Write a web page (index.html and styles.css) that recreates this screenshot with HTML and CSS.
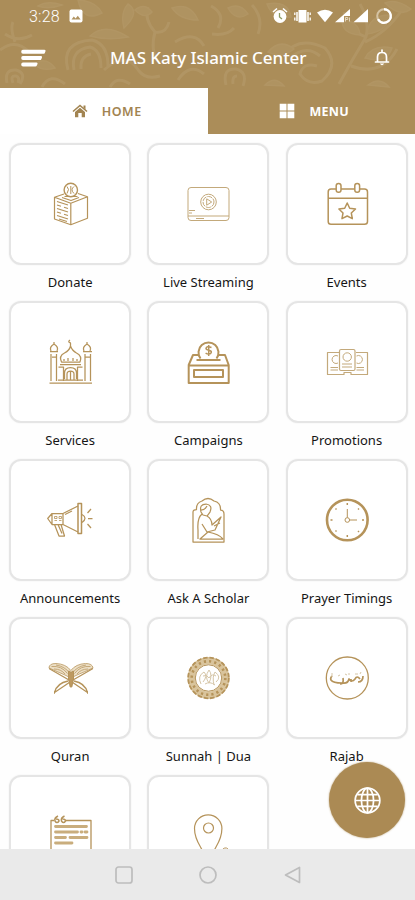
FILE: index.html
```html
<!DOCTYPE html>
<html lang="en">
<head>
<meta charset="utf-8">
<meta name="viewport" content="width=device-width">
<title>MAS Katy Islamic Center</title>
<link rel="stylesheet" href="styles.css">
</head>
<body>
<div class="app">
  <header class="header">
    <svg class="pattern" viewBox="0 0 415 88" aria-hidden="true">
      <g>
        <path d="M68 70Q60 42 92 40Q108 44 108 66M74 70Q70 50 90 47Q101 50 101 68M81 69Q80 56 91 54"/>
        <path d="M104 70Q126 50 139 71Q146 80 160 76M155 32Q150 50 158 62M155 32Q144 20 148 7M155 32Q166 34 169 22"/>
        <path d="M5 34Q18 43 32 35M15 42Q10 28 13 22M0 50Q16 38 29 52M7 83Q4 69 16 70Q27 73 20 84M13 83Q10 75 16 76Q20 77 18 83"/>
        <path class="leaf" d="M90 36Q105 22 128 37Q108 41 90 36ZM124 28Q120 13 128 4Q141 12 124 28ZM78 0Q83 23 102 13Q96 1 78 0ZM135 10Q144 2 152 12Q145 20 135 10ZM38 6Q48 0 62 5Q48 10 38 6ZM34 64Q46 56 55 68Q42 72 34 64ZM172 8Q190 2 198 20Q180 20 172 8Z"/>
        <path d="M175 42Q195 30 204 46M178 80Q190 62 204 74M42 87Q50 72 65 84M110 87Q117 75 130 84"/>
      </g>
      <g>
        <path d="M212 34Q227 36 234 28M226 85Q222 68 236 69Q248 72 243 86M233 84Q232 76 237 76M283 56Q298 35 325 48Q340 65 322 81Q308 86 300 74Q303 62 317 66M290 58Q306 44 320 56"/>
        <path d="M339 84Q352 60 366 37Q370 21 360 4M365 42Q386 33 402 10M351 66Q382 77 397 49M366 37Q347 30 344 12M211 6Q226 14 218 28M252 5Q264 18 258 34"/>
        <path class="leaf" d="M367 34Q369 15 389 15Q389 31 367 34ZM360 35Q342 34 342 20Q359 21 360 35ZM365 58Q373 44 392 48Q387 64 365 58ZM385 3Q396 -2 411 9Q400 18 385 3ZM267 4Q288 0 291 17Q273 20 267 4ZM268 52Q280 38 294 49Q282 59 268 52ZM228 8Q240 2 248 14Q236 22 228 8ZM265 85Q275 75 284 86ZM368 85Q380 76 389 87Z"/>
      </g>
    </svg>
    <div class="status">
      <span class="time">3:28</span>
      <svg class="photo" viewBox="0 0 14 14"><rect x=".5" y=".5" width="13" height="13" rx="2" fill="#fff"/><path d="M2.500 10.500l2.300-3 1.800 2 2.200-2.800 2.800 3.800z" fill="#b09361"/></svg>
      <svg class="signals" viewBox="0 0 122 18">
        <g fill="#fff"><circle cx="8" cy="9.500" r="6.400"/><path d="M1 5l4-3.500M15 5l-4-3.500" stroke="#fff" stroke-width="1.600"/><path d="M26.500 3h8v12.500h-8z"/><path d="M25 5v9M36 5v9" stroke="#fff" stroke-width="1.500"/><path d="M22.800 5.500v2.500M22.800 10.500v3M38.200 5.500v2.500M38.200 10.500v3" stroke="#fff" stroke-width="1.300"/><path d="M45 5.500Q53 0 61 5.500L53 15.200z"/><path d="M63 15.200L78 2v7h-6v6.200zM81.500 15.200L96 2v13.200z"/></g>
        <path d="M7.500 6v4l2.500 2" fill="none" stroke="#8b9a62" stroke-width="1.300"/>
        <path d="M73.500 10.500v4M73.500 10.500h2.300v2h-2M77.500 10.500v4" fill="none" stroke="#e9ddc6" stroke-width=".9"/>
        <circle cx="112" cy="9" r="6.800" fill="none" stroke="#d4c3a3" stroke-width="2"/><path d="M112 2.200A6.800 6.800 0 1 1 106 12.200" fill="none" stroke="#fff" stroke-width="2.400"/>
      </svg>
    </div>
    <div class="titlebar">
      <svg class="burger" viewBox="0 0 26 20"><path d="M3 1.700h21.500q1.500 0 1 1.500l-.7 1.700q-.4.900-1.500.9H3Q1.200 5.800 1.200 3.700T3 1.700zM3 8h18q1.500 0 1 1.500l-.7 1.700q-.4.900-1.500.9H3Q1.200 12.100 1.200 10T3 8zM3 14.500h13.500q1.500 0 1 1.500l-.7 1.600q-.4.900-1.500.9H3q-1.800 0-1.800-2T3 14.500z" fill="#fff"/></svg>
      <h1>MAS Katy Islamic Center</h1>
      <svg class="bell" viewBox="0 0 16 18"><path d="M1.500 13h13M3.500 12.600V8Q3.500 3.500 8 3.500T12.500 8v4.600M8 1v2.300" fill="none" stroke="#fff" stroke-width="1.700" stroke-linecap="round"/><path d="M5.800 14.500h4.400Q8 18 5.800 14.500z" fill="#fff"/></svg>
    </div>
  </header>
  <nav class="tabs">
    <div class="tab active"><svg viewBox="0 0 16 16"><path d="M1 8.500L8 2.500l7 6" fill="none" stroke="currentColor" stroke-width="1.600"/><path d="M11.500 2.500h2v4l-2-1.500zM3 9l5-4.300L13 9v5.200H9.700V10H6.300v4.200H3z" fill="currentColor"/></svg><span>HOME</span></div>
    <div class="tab"><svg viewBox="0 0 16 16"><path d="M.7.700h6.800v6.800H.7zM8.500.700h6.800v6.800H8.500zM.7 8.500h6.800v6.800H.7zM8.500 8.500h6.800v6.800H8.500z" fill="currentColor"/></svg><span>MENU</span></div>
  </nav>
  <main class="grid">
    <div class="item"><div class="card"><svg viewBox="0 0 48 48">
      <path d="M18 14L8.500 17.300V39l16.300 5.700 16.700-6.400V16.700L32 13.500M8.500 17.300l16.300 6 16.700-6.600M24.800 23.300v21.400M16 17.500l9 3 8-3" stroke-width="1.200"/><circle cx="24.800" cy="10" r="6.700" stroke-width="1.400"/><path d="M21 6.500q3 2.500 0 7M28 6.500q-4 3 0 7M24.800 6v8M18.500 16.500h13"/><path d="M11 21.500l11 3.500M11 25l4 1.300M18 27.300l4 1.200M11 28.500l11 3.500M11 32l4 1.300M18 34.300l4 1.200M11 35.500l11 3.500M13 39l8 2.500" stroke-width="1.200"/></svg></div><p>Donate</p></div>
    <div class="item"><div class="card"><svg class="thin" viewBox="0 0 48 48">
      <rect x="4" y="7.500" width="41" height="33" rx="3"/><path d="M4 36h41M5 30.500h6M5 33h3M12 38.500h8"/><circle cx="24.500" cy="22" r="7.800"/><circle cx="24.500" cy="22" r="5.500" stroke-dasharray="5 1"/><path d="M22.700 18.800v6.400l5-3.200z"/></svg></div><p>Live Streaming</p></div>
    <div class="item"><div class="card"><svg class="medium" viewBox="0 0 48 48">
      <path d="M13 9H8Q5.200 9 5.200 12v29.500q0 2.800 2.800 2.800h33.500q3 0 3-2.800V12q0-3-3-3H37M18 9h14M5.200 18.300h39.300"/><rect x="13.200" y="3.500" width="4.800" height="8.700" rx="2.300"/><rect x="31.800" y="3.500" width="4.800" height="8.700" rx="2.300"/><path d="M24.200 23l2.500 5.200 5.800.800-4.200 4 1 5.700-5.100-2.700-5.200 2.700 1-5.700-4.100-4 5.800-.8z"/></svg></div><p>Events</p></div>

    <div class="item"><div class="card"><svg class="mosque" viewBox="0 0 48 48">
      <path d="M3.500 45h42.500M5 43V16M10.500 43V16M39 43V16M44.500 43V16M4 13.500h8M37 13.500h9M5 13q-2-4 3-7 5 3 3 7M38 13q-2-4 3-7 5 3 3 7M8 4v2M41 4v2M11 19h-5M39 19h5"/><path d="M15.500 24q-3-6 3-9 5-2.500 6-7 1.500 4.500 6 7 6 3 3.500 9zM24.500 8V5M24 2q-3 2 1 3M12.500 29h5v14M36.500 29h-5v14M14 26.500h21M18.500 41V35q0-5.500 6-5.500t6 5.500v6M21 42v-6q0-3 3.500-3t3.500 3v6M24.500 33v9M12 42h25"/><path d="M18 21v2M22 20v3M27 20v3M31 21v2"/></svg></div><p>Services</p></div>
    <div class="item"><div class="card"><svg class="bold" viewBox="0 0 48 48">
      <path d="M14.500 17H9L4.700 27v18h40V27L41 17h-6M4.700 27.500h40M10 32h29v7H10z"/><path d="M16.500 20.500a10 10 0 1 1 16 0M12.500 22h24"/><path d="M27.500 9.500q-5-2-5.500.8c0 3 5.800 1 5.300 4-.5 2.400-4 2-5.700.7M24.700 7v11" stroke-width="1.500"/></svg></div><p>Campaigns</p></div>
    <div class="item"><div class="card"><svg class="thin" viewBox="0 0 48 48">
      <path d="M16 14.500H4.500v22H21v-2h7v2h16.500v-22H33" stroke-width="1.200"/><rect x="16.500" y="11.500" width="15.500" height="21" rx="1.500" stroke-width="1.200"/><circle cx="24.200" cy="19" r="4.200"/><path d="M15 18a4 4 0 1 0 0 7M33.500 18a4 4 0 1 1 0 7M19 26h10M19 29h10M7.500 29.500H15M7.500 32H15M33.500 29.500H41M33.500 32H41"/></svg></div><p>Promotions</p></div>

    <div class="item"><div class="card"><svg class="mosque" viewBox="0 0 48 48">
      <path d="M1.700 22.500L6 17.500h11v11H6zM6 17.500v11M17 17.500L32 10M17 28.500L32 36M8.500 28.500L13 40h5.500L15 28.500M12 28.500l4 9"/><path d="M8.500 20.500h2.500v2H8.500zM13 20.500h2.500v2H13zM8.500 24.500h2.500M13 24.500h2.500" stroke-width=".8"/><path d="M19 18.500l7-3.500"/><path d="M32 7.500h3.500v30H32z" stroke-width="1.500"/><path d="M36 18.500q6 3.500 0 8M41.500 17l3.500-4M42 22.500h4.500M41.500 28l3.500 4"/></svg></div><p>Announcements</p></div>
    <div class="item"><div class="card"><svg class="mosque" viewBox="0 0 48 48">
      <path d="M9 46V16q0-2.500 3.500-2.500Q12 7 18 5q6-5 12 0 7 1.500 6.500 9 3.500 0 3.500 4v28z"/><path d="M17 16q-2-8 5-8 7 1 4 8l-3 4-4-1zM18 18q-5 4-4 16v9M23 20q5 3 5 9l9-8-6 13-8 2-5-8M24 36l-8 7h23q-4-5-15-7M17 14q4 0 6-4M30 30l6-3"/></svg></div><p>Ask A Scholar</p></div>
    <div class="item"><div class="card"><svg viewBox="0 0 48 48">
      <circle cx="24.300" cy="24" r="20.300" stroke-width="2.600"/><circle cx="24.300" cy="24" r="2.300"/><path d="M24.300 21.700V13M26.600 24H34"/><path d="M24.300 7v2M24.300 39v2M7.500 24h2M39 24h2M12.500 12.500l1 1M35 35l1 1M12.500 35.500l1-1M35 13.500l1-1" stroke-width="1.500"/></svg></div><p>Prayer Timings</p></div>

    <div class="item"><div class="card"><svg viewBox="0 0 48 48">
      <path d="M3 14q0-4.500 7-4.500 10 .5 14.800 7Q30 10 39.500 9.500q7 0 7.500 4.500l-16 7-6.200 3L19 21z" fill="#ecdfc6" stroke="#c5a878"/><path d="M5.500 12.500q10-1 16 7M10 11q9 1.500 13.500 8M44.500 12.500q-10-1-16 7M40 11q-9 1.500-13.500 8M8 15q7 0 11 5M42 15q-7 0-11 5" stroke="#c5a878"/><path d="M3 14.500L23 26l18.500 12.500M47 14.500L27 26 8.500 38.500M22 27Q11 29 8.500 38.500M28 27q11 2 13.500 11.500" stroke-width="1.300"/><path d="M22.500 17q2 0 2.500 2 .5-2 2.500-2v8l-1.700 8h-1.600l-1.700-8z" fill="#bd9960"/><path d="M8 38.500h1M41 38.500h1" stroke-width="2.300"/></svg></div><p>Quran</p></div>
    <div class="item"><div class="card"><svg viewBox="0 0 48 48">
      <circle cx="24.500" cy="24" r="17.200" stroke="#d9c49c" stroke-width="7.500"/><circle cx="24.500" cy="24" r="20.300" stroke-width="1.800" stroke-dasharray="4.500 1.900"/><circle cx="24.500" cy="24" r="16.800" stroke-width="2.600" stroke-dasharray="2.200 3.080"/><circle cx="24.500" cy="24" r="13.200"/><path class="faint" d="M17 30q-4-8 3-12 4 4-1 10M25 29q-5-6 0-13 4 5 0 13M30 31q-2-8 1-13 7 5 1 10M19 22q4-2 6 2 3-5 7-2M21 30q5-3 10 1"/></svg></div><p>Sunnah | Dua</p></div>
    <div class="item"><div class="card"><svg viewBox="0 0 48 48">
      <circle cx="24.300" cy="24" r="21" stroke-width="1.300"/><path d="M40 22q0 6-5 6M37 25q-3-4-5 0-3 4-6 0-1 5-7 4-9 0-11-3-1-2 1-4M20 24q1 6-3 6M28 25v3" stroke-width="1.700"/><path class="faint" d="M9 19v4M15 22l2-1M22 20l2 1M26 21v-2M32 20h3M37 20l1-2"/></svg></div><p>Rajab</p></div>

    <div class="item"><div class="card"><svg viewBox="0 0 48 48">
      <path d="M8 8.500H5V48M20 8.500h25V48M44 8.500h-3" stroke-width="1.300"/><path d="M12 4q-4 2-3 5 2 3 4 0 0-2-3-2M18.500 4q-4 2-3 5 2 3 4 0 0-2-3-2" stroke-width="1.500"/><path d="M9.500 14.500h31M9.500 20h22M35 20h1M39 20h2M9.500 25.500h10M24 25.500h17M9.500 31H26" stroke-width="2.800" stroke="#c9ad7d" stroke-linecap="round"/></svg></div></div>
    <div class="item"><div class="card"><svg viewBox="0 0 48 48">
      <path d="M23.500 48l-7-13Q10.500 25 10.500 16.500a13.700 13.700 0 0 1 27.400 0Q37.900 25 32 35l-7 13" stroke-width="1.200"/><circle cx="24.500" cy="16" r="5" stroke-width="1.200"/><path d="M37 39q4-5 7-2l2 3"/></svg></div></div>
  </main>
  <div class="fab"><svg viewBox="0 0 28 28"><circle cx="14" cy="14" r="12.800"/><ellipse cx="14" cy="14" rx="6.300" ry="12.800"/><path d="M14 1.200v25.600M1.200 14h25.600M3.500 8h21M3.500 20h21"/></svg></div>
  <footer class="sysnav">
    <svg viewBox="0 0 20 20"><rect x="2" y="2" width="16" height="16" rx="2.500"/></svg>
    <svg viewBox="0 0 20 20"><circle cx="10" cy="10" r="8"/></svg>
    <svg viewBox="0 0 20 20"><path d="M16.500 2.500v15L2.500 10z" stroke-linejoin="round"/></svg>
  </footer>
</div>
</body>
</html>
```

FILE: styles.css
```css
* { box-sizing: border-box; }
body { margin: 0; background: #fefefe; font-family: "Noto Sans", "Open Sans", sans-serif; }
svg { display: block; flex: none; }
.app { position: relative; width: 415px; height: 900px; overflow: hidden; display: flex; flex-direction: column; }

.header { position: relative; flex: none; height: 88px; background: #ab8d59; color: #fff; }
.pattern { position: absolute; inset: 0; width: 415px; height: 88px; fill: none; stroke: #b69b6b; stroke-width: 3; opacity: .62; }
.pattern .leaf { fill: #b39766; stroke-width: 1.5; }
.status { position: relative; height: 32px; padding: 0 21px 0 29px; display: flex; align-items: center; }
.time { width: 40px; font: 300 16px Roboto, sans-serif; letter-spacing: .2px; }
.photo { width: 14px; height: 14px; }
.signals { width: 122px; height: 18px; margin-left: auto; }
.titlebar { position: relative; height: 52px; padding: 0 25px 0 20px; display: flex; align-items: center; }
.burger { width: 26px; height: 20px; }
.titlebar h1 { flex: none; margin: 0 auto 1px 64px; font-size: 17px; font-weight: 500; line-height: 24px; white-space: nowrap; letter-spacing: -.05px; }
.bell { width: 16px; height: 18px; }

.tabs { flex: none; display: flex; height: 46px; }
.tab { flex: 1; display: flex; align-items: center; justify-content: center; gap: 14px; background: #ab8d59; color: #fff; font-size: 12.5px; font-weight: 700; letter-spacing: .3px; padding-left: 6px; }
.tab.active { background: #fff; color: #a28451; font-weight: 600; letter-spacing: .5px; }
.tab svg { width: 16px; height: 16px; }

.grid { flex: 1; min-height: 0; overflow: hidden; padding: 9px 0 0 1px; display: grid; grid-template-columns: repeat(3, 138.25px); grid-auto-rows: 158px; }
.item { display: flex; flex-direction: column; align-items: center; }
.card { width: 122px; height: 122px; flex: none; display: flex; align-items: center; justify-content: center; border: 2px solid #e5e5e5; border-radius: 12px; background: #fff; box-shadow: 0 0 2px #eee; }
.card svg { width: 48px; height: 48px; fill: none; stroke: #b5935a; stroke-width: 1; stroke-linejoin: round; }
.card svg.mosque { stroke-width: 1.25; }
.card svg.thin { stroke: #c3a97b; }
.card svg.medium { stroke-width: 1.5; }
.card svg.bold { stroke-width: 2; }
.card .faint { stroke: #d6c6a8; }
.item p { margin: 7px 0 0; color: #151515; font-size: 13px; line-height: 20px; white-space: nowrap; }

.fab { position: absolute; left: 329px; top: 762px; width: 76px; height: 76px; border-radius: 50%; background: #ab8a54; display: flex; align-items: center; justify-content: center; box-shadow: 0 0 2px #b49a6d; }
.fab svg { width: 27px; height: 27px; fill: none; stroke: #fff; stroke-width: 1.8; }
.sysnav { flex: none; height: 51px; background: #eaeaea; display: flex; align-items: center; justify-content: center; gap: 64.5px; padding-left: 1px; }
.sysnav svg { width: 20px; height: 20px; fill: none; stroke: #bdbdbd; stroke-width: 1.7; }
```
